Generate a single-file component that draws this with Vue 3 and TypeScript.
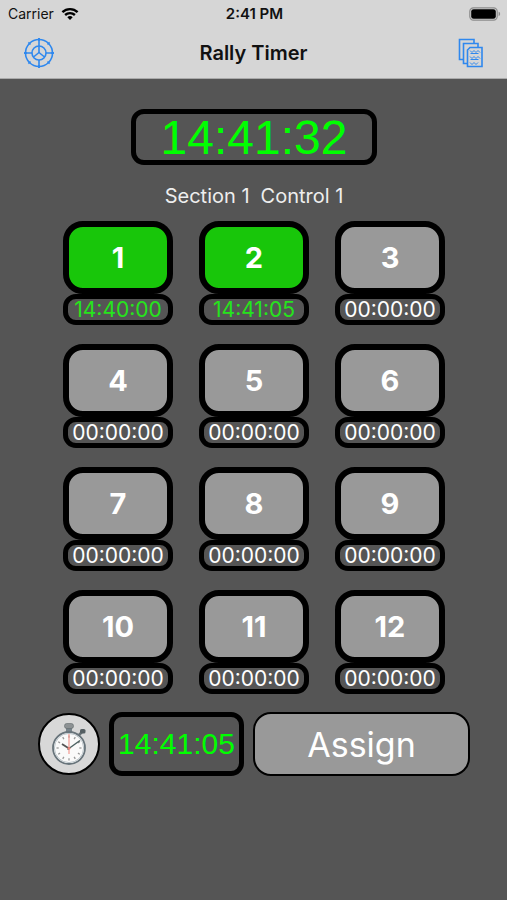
<script setup lang="ts">
import { ref } from 'vue'

interface Car {
  id: number
  time: string
}

const EMPTY = '00:00:00'
const clock = ref('14:41:32')
const captured = ref('14:41:05')
const section = ref(1)
const control = ref(1)

const cars = ref<Car[]>(
  Array.from({ length: 12 }, (_, i) => ({
    id: i + 1,
    time: ['14:40:00', '14:41:05'][i] ?? EMPTY,
  })),
)

const selected = ref<Car | null>(null)

function capture() {
  captured.value = clock.value
}

function assign() {
  if (selected.value) selected.value.time = captured.value
}

const ticks = Array.from({ length: 12 }, (_, i) => i * 30)
const spokes = Array.from({ length: 8 }, (_, i) => i * 45)
</script>

<template>
  <div class="app">
    <header class="top">
      <div class="status">
        <span class="carrier">
          Carrier
          <svg class="wifi" viewBox="0 0 18 14" aria-hidden="true">
            <path d="M1.4 5.2a11 11 0 0 1 15.2 0" />
            <path d="M4.1 8a7.2 7.2 0 0 1 9.8 0" />
            <path class="dot" d="M6.3 10.3a4 4 0 0 1 5.4 0L9 13z" />
          </svg>
        </span>
        <span class="status-time">2:41 PM</span>
        <svg class="battery" viewBox="0 0 32 14" aria-hidden="true">
          <rect x="0.8" y="0.8" width="27.4" height="12.4" rx="3.6" fill="none" stroke="#8c8c8c" stroke-width="1.2" />
          <rect x="2.2" y="2.2" width="24.6" height="9.6" rx="2.4" fill="#000" />
          <path d="M29.6 4.8c2 .6 2 3.8 0 4.4z" fill="#8c8c8c" />
        </svg>
      </div>
      <nav class="bar">
        <button class="icon settings" type="button" aria-label="Settings">
          <svg class="wheel" viewBox="0 0 32 32" aria-hidden="true">
            <circle cx="16" cy="16" r="13.500" />
            <circle cx="16" cy="16" r="7" />
            <path d="M16 1v8M16 23v8M1 16h8M23 16h8" />
            <path d="M16 9v6.500M16 15.500l-5.500 4.500M16 15.500l5.500 4.500" />
            <path v-for="a in spokes" :key="a" d="M16 1v3" :transform="`rotate(${a} 16 16)`" />
          </svg>
        </button>
        <h1>Rally Timer</h1>
        <button class="icon documents" type="button" aria-label="Documents">
          <svg class="docs" viewBox="0 0 26 30" aria-hidden="true">
            <path d="M6 21.5H1.5V1.500H16V5" />
            <path d="M10 25.500H5.500V5.500H20V9" />
            <path d="M12 9.500h12v19H9.500V12z" />
            <path class="scribble" d="M12 12.500l2 2 2-2 2 2 2-2 2 2M12.500 15.500h8M12 18.500l2 2 2-2 2 2 2-2 2 2M12.500 21.500h8M12 24.500l2 2 2-2 2 2 2-2" />
          </svg>
        </button>
      </nav>
    </header>

    <main>
      <div class="clock">{{ clock }}</div>
      <p class="place"><span>Section {{ section }}</span><span>Control {{ control }}</span></p>

      <div class="grid">
        <div v-for="car in cars" :key="car.id" class="cell" :class="{ done: car.time !== EMPTY }">
          <button class="car" type="button" @click="selected = car">{{ car.id }}</button>
          <div class="time">{{ car.time }}</div>
        </div>
      </div>

      <div class="actions">
        <button class="stopwatch" type="button" aria-label="Capture time" @click="capture">
          <svg viewBox="0 0 40 44" aria-hidden="true">
            <rect x="17" y="5" width="6" height="5" fill="#77838a" />
            <rect x="15.500" y="1.500" width="9" height="5" rx="2.200" fill="#8d9294" stroke="#62696c" stroke-width=".6" />
            <path d="M30 13l3-3" stroke="#6a7378" stroke-width="2.500" />
            <rect x="31" y="7" width="5.500" height="4.500" rx="1.600" fill="#555f63" />
            <circle cx="20" cy="26" r="16" fill="#fafafa" stroke="#68747b" stroke-width="1.800" />
            <circle cx="20" cy="26" r="14.600" fill="none" stroke="#bcc5ca" stroke-width="1" />
            <path
              v-for="a in ticks"
              :key="a"
              d="M20 13.500v2.200"
              stroke="#999"
              stroke-width="1.300"
              :transform="`rotate(${a} 20 26)`"
            />
            <path d="M20 12v20" stroke="#f39a92" stroke-width="1.200" />
            <path d="M20 26.500L13 22" stroke="#555" stroke-width="1.800" />
            <path d="M18.500 27.500L31 18.500" stroke="#4d6262" stroke-width="1.500" />
            <circle cx="20" cy="26.300" r="1.400" fill="#e98277" />
          </svg>
        </button>
        <div class="captured">{{ captured }}</div>
        <button class="assign" type="button" @click="assign">Assign</button>
      </div>
    </main>
  </div>
</template>

<style>
html,
body {
  margin: 0;
  background: #555;
}
</style>

<style scoped>
.app {
  min-height: 100vh;
  background: #555;
  color: #fff;
  font-family: Inter, "Liberation Sans", sans-serif;
}

button {
  margin: 0;
  padding: 0;
  font-family: inherit;
  color: inherit;
  cursor: pointer;
}

.top {
  background: #d6d6d6;
  border-bottom: 1px solid #aaa;
  color: #111;
}

.status {
  display: grid;
  grid-template-columns: 1fr auto 1fr;
  align-items: center;
  height: 27px;
  padding: 0 6px 0 8px;
  font-size: 14px;
}

.carrier {
  display: flex;
  align-items: center;
  gap: 7px;
}

.wifi {
  width: 18px;
  height: 14px;
  fill: none;
  stroke: #000;
  stroke-width: 2.4;
}

.wifi .dot {
  fill: #000;
  stroke: none;
}

.status-time {
  font-size: 15px;
  font-weight: 600;
}

.battery {
  justify-self: end;
  width: 32px;
  height: 14px;
}

.bar {
  display: grid;
  grid-template-columns: 1fr auto 1fr;
  align-items: center;
  height: 51px;
  padding: 0 23px;
}

h1 {
  margin: 0;
  font-size: 20px;
  font-weight: 600;
}

.icon {
  display: grid;
  place-items: center;
  border: 0;
  background: none;
}

.settings {
  justify-self: start;
}

.documents {
  justify-self: end;
}

.icon svg {
  fill: none;
  stroke: #2f88ee;
}

.wheel {
  width: 32px;
  height: 32px;
  stroke-width: 1.6;
}

.docs {
  width: 26px;
  height: 30px;
  stroke-width: 1.6;
}

.docs .scribble {
  stroke-width: 1;
}

main {
  display: flex;
  flex-direction: column;
  align-items: center;
  padding: 30px 37px 30px 38px;
}

.clock,
.captured {
  box-sizing: border-box;
  display: grid;
  place-items: center;
  border: 5px solid #000;
  border-radius: 13px;
  color: #0f0;
  font-family: "Liberation Sans", Arial, sans-serif;
}

.clock {
  width: 246px;
  height: 56px;
  font-size: 48px;
  line-height: 48px;
}

.place {
  display: flex;
  gap: 11px;
  margin: 19px 0 12px;
  font-size: 20px;
  line-height: 25px;
  color: #eee;
}

.grid {
  display: grid;
  grid-template-columns: repeat(3, 1fr);
  gap: 19px 26px;
  width: 100%;
  max-width: 382px;
}

.cell {
  display: flex;
  flex-direction: column;
}

.car {
  height: 73px;
  border: 6px solid #000;
  border-radius: 20px;
  background: #999;
  font-size: 29px;
  font-weight: 700;
}

.done .car {
  background: #18c60a;
}

.time {
  box-sizing: border-box;
  display: flex;
  align-items: center;
  justify-content: center;
  height: 31px;
  border: 5px solid #000;
  border-radius: 13px;
  font-size: 21px;
  line-height: 21px;
}

.done .time {
  color: #26e41c;
}

.actions {
  display: flex;
  align-items: center;
  gap: 9px;
  width: 100%;
  margin-top: 18px;
}

.stopwatch {
  display: grid;
  place-items: center;
  flex: none;
  width: 62px;
  height: 62px;
  border: 2px solid #000;
  border-radius: 50%;
  background: #d8d8d8;
}

.stopwatch svg {
  width: 40px;
  height: 44px;
}

.captured {
  flex: none;
  width: 135px;
  height: 64px;
  font-size: 30px;
}

.assign {
  flex: 1;
  height: 64px;
  border: 2px solid #000;
  border-radius: 18px;
  background: #999;
  font-size: 34px;
}
</style>
